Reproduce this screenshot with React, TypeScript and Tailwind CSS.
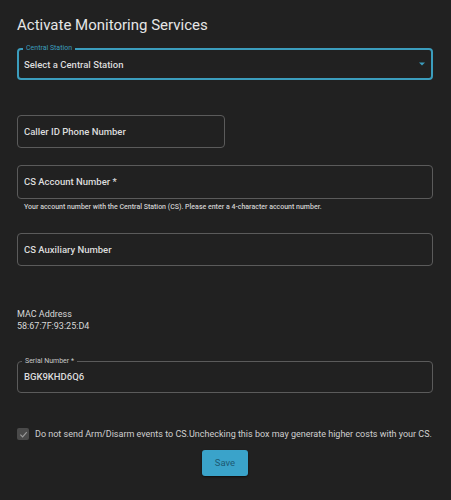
import React from "react";

function Outlined({ label, value, width, height, focused }: { label?: string; value: string; width?: string; height?: string; focused?: boolean }) {
  const border = focused ? "border-2 border-[#3b9dbd]" : "border border-[#5b5b5b]";
  return (
    <div className={`relative ${width ?? "w-[416px]"} ${height ?? "h-[33px]"} rounded-[4px] ${border}`}>
      {label ? (
        <span
          className={`absolute left-[4px] ${focused ? "-top-[6px]" : "-top-[5px]"} px-[3px] bg-[#212121] text-[7px] leading-[8px] ${focused ? "text-[#3b9dbd]" : "text-[#c8c8c8]"}`}
        >
          {label}
        </span>
      ) : null}
      <div className={`absolute ${focused ? "left-[5px] pt-[3px]" : "left-[6px] pt-[1px]"} top-0 bottom-0 flex items-center text-[9.5px] font-medium text-[#dcdcdc]`}>
        {value}
      </div>
      {focused ? (
        <svg className="absolute right-[4px] top-1/2 -translate-y-1/2" width="10" height="10" viewBox="0 0 10 10">
          <path d="M2 3.5 L8 3.5 L5 6.5 Z" fill="#3b9dbd" />
        </svg>
      ) : null}
    </div>
  );
}

export default function App() {
  return (
    <div className="w-[451px] h-[500px] bg-[#212121] pl-[17px] pr-[18px] pt-[15px] text-[#dcdcdc]" style={{ fontFamily: "Roboto, 'Liberation Sans', sans-serif" }}>
      <h1 className="text-[15px] leading-[20px] font-normal text-[#e6e6e6]">Activate Monitoring Services</h1>
      <div className="mt-[13px]">
        <Outlined label="Central Station" value="Select a Central Station" height="h-[32px]" focused />
      </div>
      <div className="mt-[35px]">
        <Outlined value="Caller ID Phone Number" width="w-[208px]" />
      </div>
      <div className="mt-[17px]">
        <Outlined value="CS Account Number *" height="h-[34px]" />
        <div className="pl-[7px] mt-[3px] text-[7px] leading-[10px] font-medium text-[#d0d0d0] whitespace-nowrap">
          Your account number with the Central Station (CS). Please enter a 4-character account number.
        </div>
      </div>
      <div className="mt-[21px]">
        <Outlined value="CS Auxiliary Number" />
      </div>
      <div className="mt-[42px] text-[9px] leading-[12px] text-[#d8d8d8]">
        <div>MAC Address</div>
        <div>58:67:7F:93:25:D4</div>
      </div>
      <div className="mt-[29px]">
        <Outlined label="Serial Number *" value="BGK9KHD6Q6" height="h-[32px]" />
      </div>
      <div className="mt-[35px] flex items-center gap-[6px]">
        <div className="w-[12px] h-[12px] rounded-[2px] bg-[#4a4a4a] flex items-center justify-center shrink-0">
          <svg width="9" height="9" viewBox="0 0 10 10">
            <path d="M1.5 5.2 L4 7.6 L8.6 2.4" stroke="#9a9a9a" strokeWidth="1.3" fill="none" />
          </svg>
        </div>
        <div className="text-[9px] leading-[12px] text-[#d0d0d0] whitespace-nowrap">
          Do not send Arm/Disarm events to CS.Unchecking this box may generate higher costs with your CS.
        </div>
      </div>
      <div className="mt-[10px] flex justify-center">
        <button className="w-[46px] h-[26px] rounded-[3px] bg-[#3aa3ca] text-[9.5px] text-[#1d5a73] shadow-[0_1px_2px_rgba(0,0,0,0.6)]">
          Save
        </button>
      </div>
    </div>
  );
}
